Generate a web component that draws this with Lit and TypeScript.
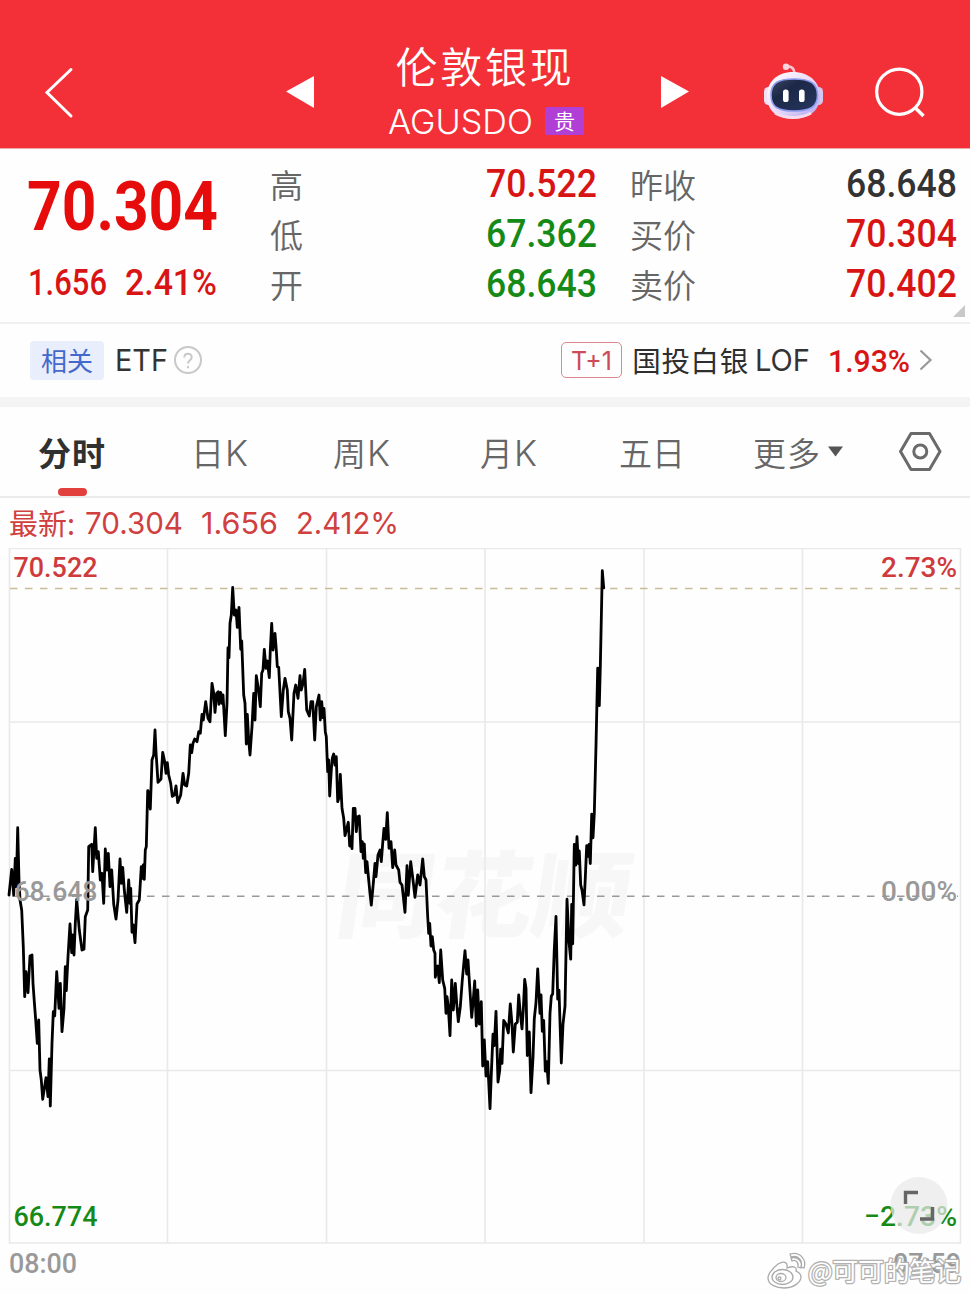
import { LitElement, html, svg, css } from "lit";
import { customElement } from "lit/decorators.js";

// Text fitted to a given advance width; the box height is the cap height.
const fit = (text: string, w: number, cap: number, cls: string) => html`
  <svg class="fit ${cls}" width=${w} height=${cap}>
    <text x="0" y=${cap} font-size=${cap / 0.715} textLength=${w} lengthAdjust="spacingAndGlyphs">${text}</text>
  </svg>`;

const windows = [
  { x: 0, y: 700, sx: 3, sy: 3, d: "27,585 35,508 38,545 41,585 46,475 49,560 53,383 57,540 60,600 65,630 70,740 74,890 78,815 84,878 90,768 96,765 99,850 103,905 107,960 112,1030 116,960 120,1110 124,1140 128,1198 138,1133 144,1190 148,1077 151,1218 156,1030 160,935 164,948 170,815 177,925 181,850 186,995 192,925 196,800 199,872 204,770 210,672 215,758 218,705 222,765 226,670 230,598 238,690 246,750 252,748 256,650 263,630 266,440 275,433 278,515 286,383 290,475 295,455 301,540 306,520 311,610 316,447 320,510 325,460 330,560 335,510 341,612 348,657 354,600 360,477 364,550 368,502 373,570 380,637 386,540 390,610 392,565 396,697 400,675 405,728 411,612 418,600 424,500 428,535 430,495 433,538 436,450 439,440 443,272" },
  { x: 140, y: 560, sx: 3, sy: 3, d: "24,692 31,747 36,600 41,585 45,510 48,575 54,667 63,657 68,577 74,605 78,640 82,608 86,645 92,670 97,709 103,705 108,678 113,728 122,705 129,640 134,675 140,678 146,640 151,555 155,578 159,550 164,537 171,545 176,515 181,520 186,463 190,480 197,425 204,475 210,485 216,370 221,400 225,457 230,400 235,395 237,433 242,397 246,430 249,405 256,527 261,430 264,263 267,293 270,190 274,165 278,82 283,165 288,150 292,202 297,142 302,268 305,243 311,405 315,430 319,552 322,463 326,540 330,585 336,500 341,400 345,480 349,347 355,385 361,440 365,340 369,330 373,268 378,325 382,303 388,353 391,270 395,190 399,270 405,220 409,270 412,320 416,322 424,470 430,390 435,355 442,390 445,455 450,475 455,540 462,400 467,375 474,415 480,347 484,390 489,370 494,328 500,450 508,468 513,425 518,425 524,540 529,440 537,405 541,480 545,425 549,473 552,445 556,515" },
  { x: 320, y: 720, sx: 3, sy: 3, d: "19,50 23,155 26,120 29,228 34,150 37,115 41,102 45,135 49,110 53,245 58,230 61,163 66,265 71,295 75,347 85,307 89,378 93,350 96,386 100,265 105,265 109,335 113,290 118,288 123,395 127,365 130,415 133,372 137,458 141,425 146,480 150,520 154,555 160,490 165,430 168,470 174,405 180,390 184,425 188,370 192,325 197,358 202,278 207,385 213,365 218,443 224,390 228,435 236,450 240,487 246,495 250,530 255,577 261,437 265,525 272,425 279,480 285,532 293,465 300,495 308,417 313,470 318,480 323,590 326,640 329,610 333,678 337,650 341,690 345,700 346,772 353,738 358,788 362,690 368,780 374,805 378,880 381,830 385,860 390,947 395,780 400,870 406,790 410,850 415,905 421,860 427,780 435,692 440,762 444,720 449,800 455,892 459,850 464,783 469,918 473,810 478,912 484,845 488,1038 493,960 498,1068 503,1025" },
  { x: 460, y: 560, sx: 3, sy: 2.801, d: "90,1537 94,1440 99,1328 103,1360 108,1264 114,1462 119,1430 122,1370 126,1410 131,1290 138,1300 145,1325 151,1243 156,1300 160,1378 166,1300 172,1295 176,1218 181,1270 186,1313 190,1260 194,1175 198,1200 202,1388 208,1322 213,1492 219,1395 223,1285 228,1240 233,1145 240,1270 243,1218 247,1320 251,1290 256,1432 260,1405 265,1466 270,1270 274,1222 278,1215 283,1090 288,998 293,1230 297,1205 304,1409 309,1300 315,1250 321,950 327,1070 332,1118 335,965 338,1075 343,797 347,855 351,775 355,850 358,815 362,910 366,925 372,966 376,890 380,800 384,830 387,797 391,850 395,712 399,778 403,710 408,520 413,303 418,408 421,300 427,30 431,78" },
];
const trace = windows
  .flatMap((s) => s.d.split(" ").map((p) => {
    const [a, b] = p.split(",").map(Number);
    return `${(s.x + a / s.sx).toFixed(1)},${(s.y + b / s.sy).toFixed(1)}`;
  }))
  .join(" ");

const label = (text: string, x: number, y: number, w: number, cls: string) => svg`
  <text class="axis ${cls}" x=${x} y=${y} textLength=${w} lengthAdjust="spacingAndGlyphs">${text}</text>`;

@customElement("price-chart")
export class PriceChart extends LitElement {
  static styles = css`
    :host { display: block; }
    svg { display: block; }
    .grid { fill: none; stroke: #e9e9e9; stroke-width: 1.6; }
    .mid { stroke: #999; stroke-width: 1.6; stroke-dasharray: 7.5 7.5; }
    .top { stroke: #c9bd97; stroke-width: 1.5; stroke-dasharray: 7.5 7.5; }
    .line { fill: none; stroke: #000; stroke-width: 2.8; stroke-linejoin: round; stroke-linecap: round; }
    .axis { font: 500 28.5px Roboto, "Liberation Sans", sans-serif; }
    .up { fill: #cf3a3c; }
    .down { fill: #168a16; }
    .flat { fill: #999; }
    .brand { font: 900 94px "Noto Sans CJK SC", sans-serif; fill: #f7f7f7; }
    .credit { font: 400 26px "Noto Sans CJK SC", sans-serif; fill: #fff; stroke: #b2b2b2; stroke-width: 2.6; paint-order: stroke; stroke-linejoin: round; }
  `;
  render() {
    return html`
      <svg width="970" height="746" viewBox="0 548 970 746">
        <text class="brand" transform="translate(333 930) skewX(-8)" textLength="294" lengthAdjust="spacingAndGlyphs">同花顺</text>
        <path class="grid" d="M9.5 548.5H960.500V1243H9.500ZM167.500 548V1243M326.500 548V1243M485 548V1243M644 548V1243M802.500 548V1243M9 722H960M9 1070.500H960" />
        <path class="top" d="M10 588.500H960" />
        <path class="mid" d="M12 896.300H958" />
        <polyline class="line" points=${trace} />
        ${label("70.522", 13.5, 577, 84, "up")}
        ${label("2.73%", 881, 577, 76, "up")}
        ${label("68.648", 14.5, 901, 83, "flat")}
        ${label("0.00%", 881, 901, 76, "flat")}
        ${label("66.774", 13.5, 1226, 84, "down")}
        ${label("−2.73%", 864, 1226, 93, "down")}
        ${label("08:00", 9, 1273, 68, "flat")}
        ${label("07:59", 893, 1273, 68, "flat")}
        <circle cx="919" cy="1205.500" r="28.500" fill="#e9e9e9" fill-opacity=".72" />
        <path d="M905.500 1204V1192.500H918M932.500 1207V1219H920" fill="none" stroke="#666" stroke-width="3.400" />
        <g fill="#fff" stroke="#aaa" stroke-width="1.300">
          <path d="M778 1264c-6 5-10 10-10 14 0 7 9 10 16 10 10 0 17-6 17-11 0-4-3-5-5-6 1-3-1-6-9-3 1-5-2-8-9-4Z" />
          <ellipse cx="782.500" cy="1277" rx="10.500" ry="7.500" />
          <ellipse cx="781" cy="1277.500" rx="5" ry="4" />
          <circle cx="779.500" cy="1278.500" r="1.500" />
          <path d="M791 1258c7-2 12 4 10 10l-3-1c1-4-2-8-6-6ZM790 1254c10-3 17 6 14 14l-3-1c2-7-3-12-10-10Z" />
        </g>
        <text class="credit" x="808" y="1281" textLength="153">@可可的笔记</text>
      </svg>`;
  }
}

@customElement("app-root")
export class AppRoot extends LitElement {
  static styles = css`
    :host { display: block; width: 970px; height: 1294px; overflow: hidden; background: #fefefe; font-family: "Noto Sans CJK SC", sans-serif; color: #333; }
    * { box-sizing: border-box; }
    svg { display: block; flex: none; overflow: visible; }
    .fit { fill: currentColor; font-family: Roboto, "Liberation Sans", sans-serif; font-weight: 500; }
    .sans { font-family: Inter, "Liberation Sans", sans-serif; font-weight: 400; }
    .light { font-weight: 300; }
    .bold { font-weight: 700; }
    .up { color: #d81414; }
    .big { color: #e60c0c; }
    .down { color: #168a16; }
    .ink { color: #333; }

    header { height: 149px; background: #f32f38; color: #fff; display: grid; grid-template-columns: 286px 101px 200px 176px 112px 1fr; border-bottom: 1px solid #e8a9a9; }
    .nav { padding-top: 68px; }
    .back { padding-left: 44px; }
    .next { padding-left: 72px; }
    .bot { padding-top: 63px; }
    .title { padding-top: 44px; display: flex; flex-direction: column; align-items: center; }
    .name { font-size: 42px; line-height: 42px; letter-spacing: 2.8px; white-space: nowrap; font-weight: 350; margin-left: -4px; }
    .code { display: flex; align-items: center; gap: 12px; margin: 21px 0 0 -2px; }
    .tag { width: 39px; height: 28px; background: #b13fd6; border-radius: 2px; font-size: 21px; line-height: 27px; text-align: center; }

    .quote { height: 175px; padding: 10px 0 0 27px; display: grid; grid-template-columns: 243px 216px 111px 33px 216px 111px; border-bottom: 2px solid #f0f0f0; position: relative; }
    .last { padding-top: 22px; }
    .change { display: flex; gap: 18px; padding: 39px 0 0 1px; }
    .col { display: grid; grid-template-rows: repeat(3, 50px); align-items: center; align-content: start; }
    .col span { font-size: 33px; line-height: 50px; color: #666; font-weight: 350; }
    .value { padding-bottom: 3px; margin-top: -1px; }
    .buy { grid-column: 5; }
    .corner { position: absolute; right: 5px; bottom: 5px; }

    .related { height: 73px; display: flex; align-items: center; padding: 0 38px 1px 30px; }
    .chip { width: 74px; height: 39px; border-radius: 4px; background: #e8eefb; color: #4468cc; font-size: 26px; line-height: 37px; text-align: center; margin-right: 11px; }
    .help { margin-left: 6px; }
    .t1 { width: 61px; height: 36px; border: 1.500px solid #d98a8e; border-radius: 5px; display: grid; place-items: center; margin-left: auto; color: #cd4a5a; }
    .fund { font-size: 28.500px; line-height: 38px; letter-spacing: .700px; margin: 0 6px 0 10px; color: #2e2e2e; padding-bottom: 1px; }
    .pct { margin-left: 18px; display: flex; align-items: center; gap: 9px; }
    .band { height: 10px; background: #f4f4f4; }

    .tabs { height: 91px; border-bottom: 2px solid #ececec; display: grid; grid-template-columns: 38px 153px 142px 147px 139px 134px 145px 1fr; align-items: center; color: #666; font-size: 33px; line-height: 46px; }
    .tab { display: flex; align-items: center; gap: 1px; position: relative; font-weight: 350; white-space: nowrap; }
    .tab .fit { margin-top: 3px; }
    .tab.on { grid-column: 2; font-weight: 600; color: #303030; letter-spacing: 1px; }
    .tab.on::after { content: ""; position: absolute; left: 20px; top: 59px; width: 29px; height: 8px; border-radius: 4px; background: #e2403c; }
    .more { gap: 7px; letter-spacing: 1px; }

    .latest { height: 50px; display: flex; align-items: center; padding-left: 9px; color: #d0403f; font-size: 29px; }
    .latest span { width: 76px; line-height: 44px; padding-bottom: 2px; white-space: nowrap; }
    .latest .b { margin-left: 18px; }
    .latest .c { margin-left: 18px; }
  `;
  render() {
    return html`
      <header>
        <div class="nav back">
          <svg width="30" height="50" fill="none" stroke="#fff" stroke-width="3" stroke-linecap="round"><path d="M27 1.500L3 24.500L27 48" /></svg>
        </div>
        <div class="nav"><svg width="30" height="50"><path d="M0 23.500L28 8V40Z" fill="#fff" /></svg></div>
        <div class="title">
          <div class="name">伦敦银现</div>
          <div class="code">${fit("AGUSDO", 145, 24.500, "sans light")}<span class="tag">贵</span></div>
        </div>
        <div class="nav next"><svg width="30" height="50"><path d="M30 23.500L2 8V40Z" fill="#fff" /></svg></div>
        <div class="nav bot">
          <svg width="60" height="57">
            <defs>
              <linearGradient id="shell" x1="0" y1="0" x2="1" y2="1"><stop offset="0" stop-color="#fff" /><stop offset=".5" stop-color="#eddcf8" /><stop offset="1" stop-color="#a9a4f2" /></linearGradient>
              <linearGradient id="visor" x1="0" y1="0" x2="1" y2="1"><stop offset="0" stop-color="#3b4763" /><stop offset=".35" stop-color="#1c2847" /><stop offset="1" stop-color="#263660" /></linearGradient>
            </defs>
            <path d="M23 3.500C28 3 31 5 31.500 10" fill="none" stroke="#f8c3d2" stroke-width="2.600" />
            <circle cx="23" cy="3.800" r="3.200" fill="#fbd5dd" />
            <rect x="1" y="24" width="9" height="18" rx="4.500" fill="#f1dff3" />
            <rect x="51" y="24" width="9" height="18" rx="4.500" fill="#d5c6f0" />
            <path d="M30 9C46 9 57 19 57 33C57 48 46 55.500 30 55.500S4 48 4 33C4 19 14 9 30 9Z" fill="url(#shell)" />
            <path d="M12 50C22 56 38 56 48 50" fill="none" stroke="#f6dcec" stroke-width="3" />
            <path d="M31 16C47 16 54.500 20 54.500 32C54.500 44 47 48 31 48S8 44 8 32C8 20 15 16 31 16Z" fill="url(#visor)" stroke="#8f9cf0" stroke-width="1.600" />
            <rect x="20" y="26.500" width="5.600" height="12.500" rx="2.600" fill="#fff" />
            <rect x="36" y="26.500" width="5.600" height="12.500" rx="2.600" fill="#fff" />
          </svg>
        </div>
        <div class="nav">
          <svg width="50" height="50" fill="none" stroke="#fff" stroke-width="3.200"><circle cx="24.300" cy="23.700" r="22.600" /><path d="M40 39.500L48.500 48" stroke-width="3.600" /></svg>
        </div>
      </header>
      <section class="quote">
        <div class="last">
          ${fit("70.304", 191, 49, "big bold")}
          <div class="change">${fit("1.656", 79, 26, "up")}${fit("2.41%", 92, 26, "up")}</div>
        </div>
        <div class="col"><span>高</span><span>低</span><span>开</span></div>
        <div class="col value">${fit("70.522", 111, 28, "up")}${fit("67.362", 111, 28, "down")}${fit("68.643", 111, 28, "down")}</div>
        <div class="col buy"><span>昨收</span><span>买价</span><span>卖价</span></div>
        <div class="col value">${fit("68.648", 111, 28, "ink")}${fit("70.304", 111, 28, "up")}${fit("70.402", 111, 28, "up")}</div>
        <svg class="corner" width="12" height="12"><path d="M12 0V12H0Z" fill="#c9c9c9" /></svg>
      </section>
      <section class="related">
        <span class="chip">相关</span>
        ${fit("ETF", 53, 21, "sans ink")}
        <svg class="help" width="28" height="28" fill="none" stroke="#c8c8c8" stroke-width="2"><circle cx="14" cy="14" r="13" /><path d="M10.300 11.500c0-5 7.400-5 7.400-.3 0 3-3.700 3-3.700 6.300M14 20v2.300" /></svg>
        <span class="t1">${fit("T+1", 41, 18.500, "sans")}</span>
        <span class="fund">国投白银</span>
        ${fit("LOF", 55, 21, "sans ink")}
        <span class="pct up">${fit("1.93%", 82, 23, "")}
          <svg width="13" height="22" fill="none" stroke="#999" stroke-width="2.200"><path d="M1.500 1.500L11.500 11L1.500 20.500" /></svg>
        </span>
      </section>
      <div class="band"></div>
      <nav class="tabs">
        <div class="tab on">分时</div>
        <div class="tab">日${fit("K", 23, 25, "sans light")}</div>
        <div class="tab">周${fit("K", 23, 25, "sans light")}</div>
        <div class="tab">月${fit("K", 23, 25, "sans light")}</div>
        <div class="tab">五日</div>
        <div class="tab more">更多<svg width="15" height="11"><path d="M0 .5H15L7.500 10.500Z" fill="#555" /></svg></div>
        <svg width="44" height="40" fill="none" stroke="#6a6a6a" stroke-width="3" stroke-linejoin="round"><path d="M13 1.500H31.500L42 19.500L31.500 37.500H13L2.500 19.500Z" /><circle cx="22.300" cy="19.500" r="6.500" /></svg>
      </nav>
      <div class="latest">
        <span>最新:</span>
        ${fit("70.304", 98, 21.500, "sans")}
        <div class="b">${fit("1.656", 77, 21.500, "sans")}</div>
        <div class="c">${fit("2.412%", 103, 21.500, "sans")}</div>
      </div>
      <price-chart></price-chart>`;
  }
}
